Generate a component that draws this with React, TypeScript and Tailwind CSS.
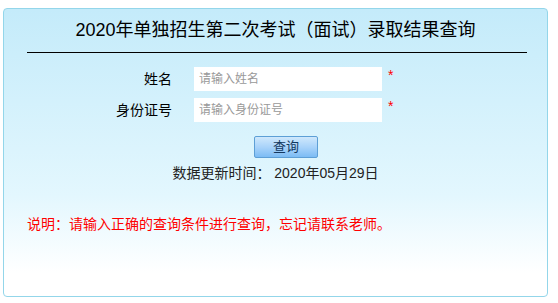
import React from 'react';

const fields = [
  { label: '姓名', placeholder: '请输入姓名' },
  { label: '身份证号', placeholder: '请输入身份证号' },
];

const App: React.FC = () => {
  return (
    <div
      className="w-[558px] h-[303px] bg-white pt-[8px] pl-[3px]"
      style={{ fontFamily: '"Liberation Sans", "Noto Sans CJK SC", sans-serif' }}
    >
      <div className="w-[545px] h-[289px] rounded-[4px] border border-[#93d6ea] bg-linear-to-b from-[#c4ebfa] via-[#e3f7fe] via-65% to-white to-92%">
        {/* Title */}
        <div className="h-[43px] flex items-center justify-center text-[18px] text-black">
          2020年单独招生第二次考试（面试）录取结果查询
        </div>
        <div className="ml-[23px] w-[500px] h-px bg-black" />

        {/* Form */}
        <div className="mt-[14px] flex flex-col gap-[7px]">
          {fields.map((field) => (
            <div key={field.label} className="flex items-center h-[24px]">
              <div className="w-[168px] text-right text-[14px] text-black leading-[24px]">{field.label}</div>
              <input
                className="ml-[22px] w-[188px] h-[24px] bg-white px-[5px] text-[12px] text-[#333] outline-none placeholder:text-[#999]"
                placeholder={field.placeholder}
              />
              <span className="ml-[6px] self-start text-[14px] leading-[16px] text-[#ff0000]">*</span>
            </div>
          ))}
        </div>

        <div className="mt-[12px] pl-[250px]">
          <button className="w-[64px] h-[22px] rounded-[2px] border border-[#5d9fd6] bg-linear-to-b from-[#cfe8fc] via-[#a9d3fa] via-50% to-[#7cbcf4] text-[13px] leading-[20px] text-[#13385f]">
            查询
          </button>
        </div>

        <div className="mt-[5px] text-center text-[14px] leading-[20px] text-[#222]">
          数据更新时间： 2020年05月29日
        </div>

        <div className="mt-[31px] pl-[23px] text-[14px] leading-[20px] text-[#ff0000]">
          说明：请输入正确的查询条件进行查询，忘记请联系老师。
        </div>
      </div>
    </div>
  );
};

export default App;
